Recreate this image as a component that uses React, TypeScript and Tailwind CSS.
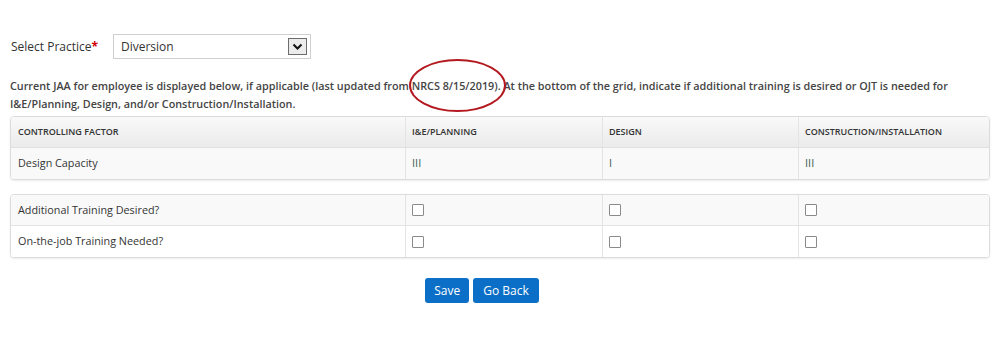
import React from "react";

const cols = "grid grid-cols-[394px_197px_196px_1fr]";

function Check() {
  return <span className="inline-block w-[12px] h-[12px] border border-[#8a8a8a] bg-white rounded-[1px]" />;
}

export default function App() {
  return (
    <div className="w-[1000px] h-[339px] bg-white text-[#333] overflow-hidden" style={{ fontFamily: '"Open Sans", sans-serif' }}>
      <div className="pt-[34px] pl-[11px] flex items-center">
        <div className="w-[102px] text-[12px] text-[#333]">
          Select Practice<span className="text-[#c00] font-bold">*</span>
        </div>
        <div className="w-[198px] h-[25px] border border-[#cfcfcf] bg-white flex items-center justify-between pl-[7px] pr-[3px] text-[12px] text-[#333]">
          <span>Diversion</span>
          <span className="w-[19px] h-[17px] border border-[#6d6d6d] bg-[#ececec] flex items-center justify-center">
            <svg width="11" height="8" viewBox="0 0 11 8"><path d="M1.5 1.5 L5.5 5.5 L9.5 1.5" stroke="#111" strokeWidth="2" fill="none" /></svg>
          </span>
        </div>
      </div>

      <div className="mt-[18px] pl-[10px] pr-[30px] text-[10.8px] leading-[18px] font-semibold text-[#444]">
        Current JAA for employee is displayed below, if applicable (last updated from{" "}
        <span className="relative">
          NRCS 8/15/2019)
          <span className="absolute left-[-3px] right-[-8px] top-[-19px] bottom-[-19px] rounded-[50%] border-[2.5px] border-[#b3191f] pointer-events-none" />
        </span>
        . At the bottom of the grid, indicate if additional training is desired or OJT is needed for I&amp;E/Planning, Design, and/or Construction/Installation.
      </div>

      <div className="mx-[10px] mt-[3px] border border-[#dcdcdc] rounded-[4px] shadow-[0_1px_2px_rgba(0,0,0,0.08)] overflow-hidden">
        <div className={`${cols} h-[31px] bg-gradient-to-b from-[#f9f9f9] to-[#ebebeb] text-[9px] font-semibold text-[#333] border-b border-[#e0e0e0]`}>
          <div className="pl-[7px] flex items-center">CONTROLLING FACTOR</div>
          <div className="pl-[6px] flex items-center border-l border-[#e4e4e4]">I&amp;E/PLANNING</div>
          <div className="pl-[6px] flex items-center border-l border-[#e4e4e4]">DESIGN</div>
          <div className="pl-[6px] flex items-center border-l border-[#e4e4e4]">CONSTRUCTION/INSTALLATION</div>
        </div>
        <div className={`${cols} h-[31px] bg-[#f9f9f9] text-[10.8px]`}>
          <div className="pl-[7px] flex items-center text-[#333]">Design Capacity</div>
          <div className="pl-[6px] flex items-center border-l border-[#e4e4e4] text-[11px] text-[#3f5f50]">III</div>
          <div className="pl-[6px] flex items-center border-l border-[#e4e4e4] text-[11px] text-[#3f5f50]">I</div>
          <div className="pl-[6px] flex items-center border-l border-[#e4e4e4] text-[11px] text-[#3f5f50]">III</div>
        </div>
      </div>

      <div className="mx-[10px] mt-[14px] border border-[#dcdcdc] rounded-[4px] shadow-[0_1px_2px_rgba(0,0,0,0.08)] overflow-hidden text-[10.8px]">
        <div className={`${cols} h-[31px] bg-[#f9f9f9] border-b border-[#e4e4e4]`}>
          <div className="pl-[7px] flex items-center">Additional Training Desired?</div>
          <div className="pl-[6px] flex items-center border-l border-[#e4e4e4]"><Check /></div>
          <div className="pl-[6px] flex items-center border-l border-[#e4e4e4]"><Check /></div>
          <div className="pl-[6px] flex items-center border-l border-[#e4e4e4]"><Check /></div>
        </div>
        <div className={`${cols} h-[31px] bg-white`}>
          <div className="pl-[7px] flex items-center">On-the-job Training Needed?</div>
          <div className="pl-[6px] flex items-center border-l border-[#e4e4e4]"><Check /></div>
          <div className="pl-[6px] flex items-center border-l border-[#e4e4e4]"><Check /></div>
          <div className="pl-[6px] flex items-center border-l border-[#e4e4e4]"><Check /></div>
        </div>
      </div>

      <div className="mt-[20px] flex justify-center gap-[4px] pr-[36px]">
        <button className="h-[25px] px-[9px] bg-[#0b6fc7] text-white text-[12px] rounded-[3px]">Save</button>
        <button className="h-[25px] px-[10px] bg-[#0b6fc7] text-white text-[12px] rounded-[3px]">Go Back</button>
      </div>
    </div>
  );
}
